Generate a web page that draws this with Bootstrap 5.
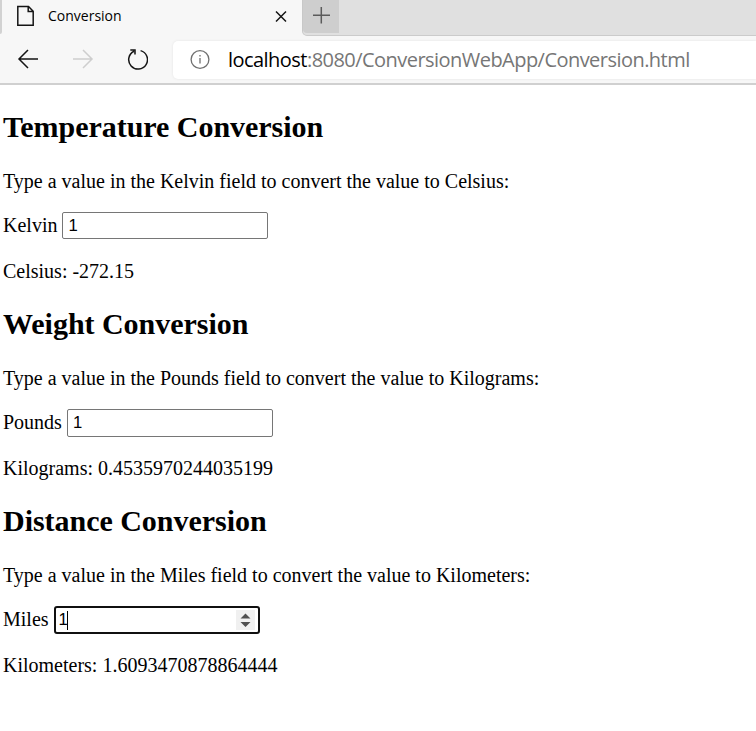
<!DOCTYPE html>
<html lang="en">
<head>
<meta charset="utf-8">
<meta name="viewport" content="width=device-width, initial-scale=1">
<title>Conversion</title>
<link href="https://cdn.jsdelivr.net/npm/bootstrap@5.3.0/dist/css/bootstrap.min.css" rel="stylesheet">
<style>
body{font:20px/23px "Liberation Serif","Times New Roman",serif;color:#000;background:#fff;overflow:hidden}
.ui{font-family:"Open Sans","Segoe UI",sans-serif}
.chrome-top{height:85px;background:#f7f7f7;border-bottom:2px solid #d0d0d0}
.tab-strip{height:36px}
.left-edge{width:2px;height:34px;background:#d2d2d2;border-radius:0 0 2px 0}
.page-tab{width:300px;padding-left:14px;background:#f7f7f7}
.tab-title{font-size:14px;line-height:20px;margin:6px 0 0 12px;width:75px;white-space:nowrap}
.strip-rest{background:#e0e0e0;border-left:1px solid #c8c8c8;border-bottom:1px solid #cbcbcb;border-bottom-left-radius:5px}
.new-tab{width:36px;height:33px;background:#cecece;padding-left:9px;border-bottom-left-radius:4px}
.tools{height:47px}
.tools svg{flex:none}
.address{height:38px;margin-left:25px;padding-left:17px;border-radius:5px 0 0 5px;box-shadow:0 0 3px rgba(0,0,0,.08)}
.url{font-size:20px;line-height:28px;letter-spacing:-.54px;margin-left:17px;color:#767676;white-space:nowrap;margin-top:1px}
.url b{font-weight:400;color:#000}
main{padding:25px 3px 0}
.conv{height:197px}
.conv h2{font-size:30px;line-height:34px;font-weight:700;letter-spacing:-.03px;margin:0 0 26px}
.conv p{margin:0;white-space:nowrap}
.hint{height:23px}
.entry{height:28px;margin:19px 0 20px}
.entry .caption{margin-top:-2px}
.field{width:206px;height:28px;padding:1px 5px;border:1px solid #767676;border-radius:2px;font:16.67px/24px "Liberation Sans",Arial,sans-serif;margin-left:5px;color:#000}
.field.short{height:27px;margin-bottom:1px}
.field.active-field{border:2px solid #101010;border-radius:3px;padding:2px 3px}
.caret{width:1px;height:19px;margin-left:-1px;background:#000}
.spin{width:19px;height:20px;background:#f0f0f0}
</style>
<script src="https://cdn.jsdelivr.net/npm/bootstrap@5.3.0/dist/js/bootstrap.bundle.min.js"></script>
</head>
<body>
<header class="chrome-top ui">
  <div class="tab-strip d-flex">
    <div class="left-edge"></div>
    <div class="page-tab d-flex align-items-start">
      <svg class="mt-1" width="20" height="24" viewBox="0 0 20 24" fill="none" stroke="#151515" stroke-width="1.5"><path d="M1.8 2.5H12.5L17.2 7.2V21.2H1.8ZM12.2 2.5V7.5H17.2"/></svg>
      <span class="tab-title">Conversion</span>
      <svg class="ms-auto" width="42" height="34" viewBox="0 0 42 34" stroke="#151515" stroke-width="1.5"><path d="M16 11.5L26 21.5M26 11.5L16 21.5"/></svg>
    </div>
    <div class="strip-rest flex-grow-1">
      <div class="new-tab"><svg class="d-block" width="20" height="30" viewBox="0 0 20 30" stroke="#5b5b5b" stroke-width="1.5"><path d="M1 15.2H18M9.3 7V23.5"/></svg></div>
    </div>
  </div>
  <div class="tools d-flex align-items-center">
    <svg width="148" height="47" viewBox="0 36 148 47" fill="none" stroke="#151515" stroke-width="1.5">
      <path d="M38 59H19M28 50L19 59L28 68"/>
      <path stroke="#cecece" d="M73 59H92M83 50L92 59L83 68"/>
      <path d="M140.6 50.6A9.4 9.4 0 1 1 134 51.2M130.3 49.9H135V54.6"/>
    </svg>
    <div class="address bg-white d-flex align-items-center flex-grow-1">
      <svg width="21" height="21" viewBox="0 0 21 21" fill="none" stroke="#707070" stroke-width="1.3"><circle cx="10" cy="10.5" r="8.9"/><path d="M10 9V14.5M10 6V7.6"/></svg>
      <span class="url"><b>localhost</b>:8080/ConversionWebApp/Conversion.html</span>
    </div>
  </div>
</header>
<main>
  <section class="conv">
    <h2>Temperature Conversion</h2>
    <p class="hint">Type a value in the Kelvin field to convert the value to Celsius:</p>
    <div class="entry d-flex align-items-center"><span class="caption">Kelvin</span><div class="field short">1</div></div>
    <p>Celsius: -272.15</p>
  </section>
  <section class="conv">
    <h2>Weight Conversion</h2>
    <p class="hint">Type a value in the Pounds field to convert the value to Kilograms:</p>
    <div class="entry d-flex align-items-center"><span class="caption">Pounds</span><div class="field">1</div></div>
    <p>Kilograms: 0.4535970244035199</p>
  </section>
  <section class="conv">
    <h2>Distance Conversion</h2>
    <p class="hint">Type a value in the Miles field to convert the value to Kilometers:</p>
    <div class="entry d-flex align-items-center"><span class="caption">Miles</span><div class="field active-field d-flex align-items-center"><span>1</span><span class="caret"></span><span class="spin ms-auto"><svg class="d-block" width="19" height="20" viewBox="0 0 19 20" fill="#505050"><path d="M4.5 8.5L9.5 3.5L14.5 8.5ZM4.5 12L9.5 17L14.5 12Z"/></svg></span></div></div>
    <p>Kilometers: 1.6093470878864444</p>
  </section>
</main>
</body>
</html>
